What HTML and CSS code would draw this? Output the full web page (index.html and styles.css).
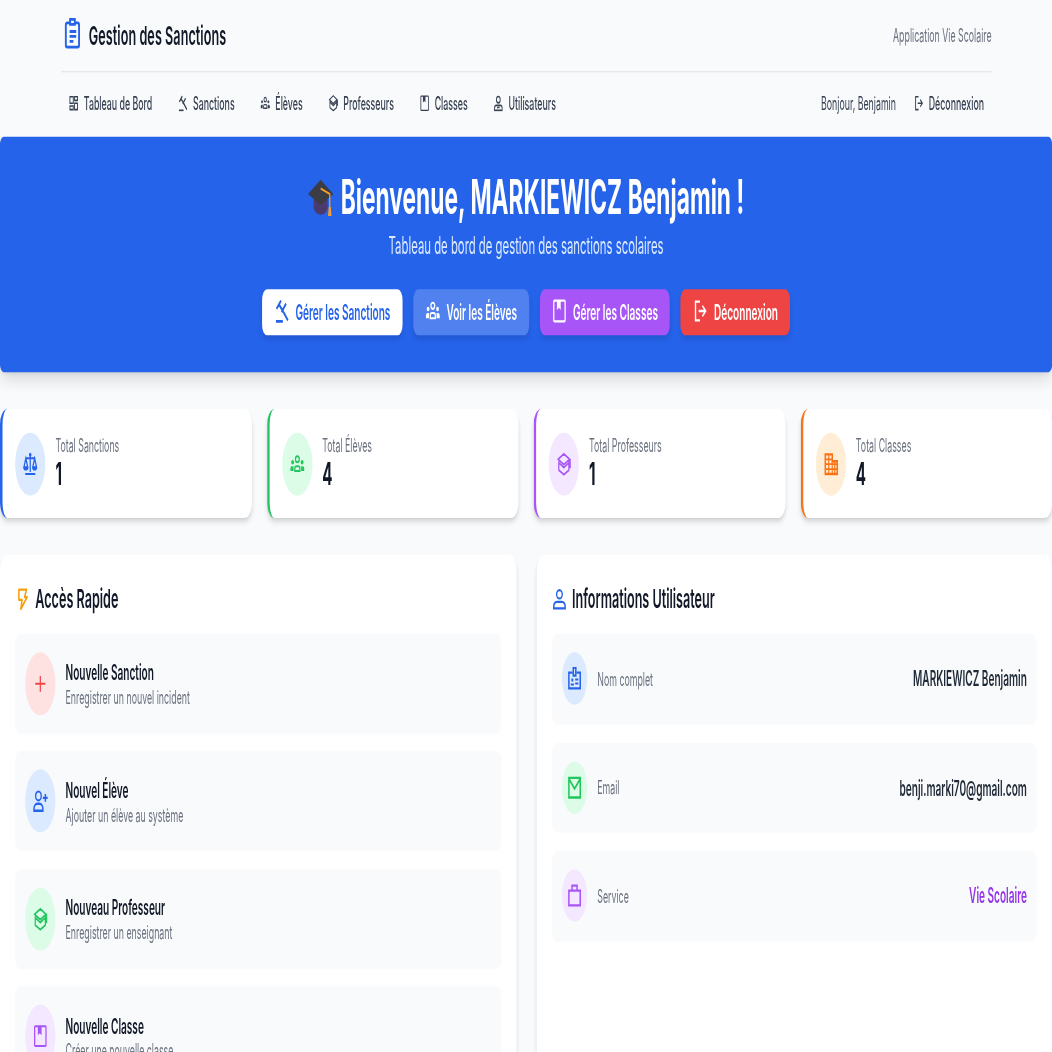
FILE: index.html
```html
<!DOCTYPE html>
<html lang="fr">
<head>
<meta charset="utf-8">
<title>Gestion des Sanctions</title>
<link rel="stylesheet" href="styles.css">
</head>
<body>
<svg class="defs" aria-hidden="true">
  <symbol id="i-clipboard" viewBox="0 0 24 24" preserveAspectRatio="none"><path d="M8.500 5H6.500A1.500 1.500 0 0 0 5 6.500v14A1.500 1.500 0 0 0 6.500 22h11a1.500 1.500 0 0 0 1.500-1.500v-14A1.500 1.500 0 0 0 17.500 5h-2M9.500 2.500h5V6h-5zM9 11h7M9 14.500h7M9 18h4" fill="none" stroke="currentColor" stroke-width="2"/></symbol>
  <symbol id="i-dash" viewBox="0 0 24 24" preserveAspectRatio="none"><path d="M3 3h8v9H3zM14 3h7v5h-7zM14 12h7v9h-7zM3 16h8v5H3z" fill="none" stroke="currentColor" stroke-width="2.200"/></symbol>
  <symbol id="i-gavel" viewBox="0 0 24 24" preserveAspectRatio="none"><path d="M3 22h11M11 2 4 10M19 5l-7 8M8 6l7 7M15 13l7 8" fill="none" stroke="currentColor" stroke-width="2.600"/></symbol>
  <symbol id="i-group" viewBox="0 0 24 24" preserveAspectRatio="none"><circle cx="12" cy="7" r="3" fill="none" stroke="currentColor" stroke-width="2"/><circle cx="4.500" cy="10" r="2.200" fill="currentColor"/><circle cx="19.500" cy="10" r="2.200" fill="currentColor"/><path d="M8 19v-2.500a2.500 2.500 0 0 1 2.500-2.500h3a2.500 2.500 0 0 1 2.500 2.500V19z" fill="none" stroke="currentColor" stroke-width="2"/><path d="M1 19v-2.500A2.500 2.500 0 0 1 3.500 14H6v5zM23 19v-2.500a2.500 2.500 0 0 0-2.500-2.500H18v5z" fill="currentColor"/></symbol>
  <symbol id="i-school" viewBox="0 0 24 24" preserveAspectRatio="none"><path d="M12 1.500 21 7l-9 5.500L3 7zM4 9v9l8 4.500 8-4.500V9M5 11l7 4.500 7-4.500M22 7v9" fill="none" stroke="currentColor" stroke-width="2"/></symbol>
  <symbol id="i-book" viewBox="0 0 24 24" preserveAspectRatio="none"><path d="M4 2h16a1 1 0 0 1 1 1v18a1 1 0 0 1-1 1H4a1 1 0 0 1-1-1V3a1 1 0 0 1 1-1z" fill="none" stroke="currentColor" stroke-width="2"/><path d="M8 2h6v9l-3-2-3 2z" fill="currentColor"/></symbol>
  <symbol id="i-users" viewBox="0 0 24 24" preserveAspectRatio="none"><circle cx="12" cy="7" r="4.500" fill="none" stroke="currentColor" stroke-width="2.200"/><path d="M3 22v-3a4 4 0 0 1 4-4h10a4 4 0 0 1 4 4v3zM9 18h6" fill="none" stroke="currentColor" stroke-width="2.200"/></symbol>
  <symbol id="i-logout" viewBox="0 0 24 24" preserveAspectRatio="none"><path d="M12 3H5v18h7M10 12h11M16 7l5 5-5 5" fill="none" stroke="currentColor" stroke-width="2.200"/></symbol>
  <symbol id="i-scale" viewBox="0 0 24 24" preserveAspectRatio="none"><circle cx="12" cy="2.500" r="2" fill="currentColor"/><path d="M12 3v17M4 22h16M4 6h16M5 6l-3 9h6zM19 6l-3 9h6z" fill="none" stroke="currentColor" stroke-width="2"/><path d="M1 15h8a4 3.500 0 0 1-8 0zM15 15h8a4 3.500 0 0 1-8 0z" fill="currentColor"/></symbol>
  <symbol id="i-building" viewBox="0 0 24 24" preserveAspectRatio="none"><path d="M3 2h11v7h8v13H3z" fill="none" stroke="currentColor" stroke-width="2.400"/><path d="M3 7h11M3 12h19M3 17h19M8.500 2v20M14 9v13M18 9v13" stroke="currentColor" stroke-width="1.800"/></symbol>
  <symbol id="i-bolt" viewBox="0 0 24 24" preserveAspectRatio="none"><path d="M6 2h12l-3 8h4L9 23l2-10H6z" fill="none" stroke="currentColor" stroke-width="2.400" stroke-linejoin="round"/></symbol>
  <symbol id="i-user" viewBox="0 0 24 24" preserveAspectRatio="none"><circle cx="12" cy="7" r="4.500" fill="none" stroke="currentColor" stroke-width="2.200"/><path d="M3 22v-2a5 5 0 0 1 5-5h8a5 5 0 0 1 5 5v2z" fill="none" stroke="currentColor" stroke-width="2.400"/></symbol>
  <symbol id="i-plus" viewBox="0 0 24 24" preserveAspectRatio="none"><path d="M12 4v16M4 12h16" fill="none" stroke="currentColor" stroke-width="2"/></symbol>
  <symbol id="i-userplus" viewBox="0 0 24 24" preserveAspectRatio="none"><circle cx="9" cy="7" r="4.500" fill="none" stroke="currentColor" stroke-width="2.200"/><path d="M2 22v-2a5 5 0 0 1 5-5h4a5 5 0 0 1 5 5v2zM20 5v8M16 9h8" fill="none" stroke="currentColor" stroke-width="2.400"/></symbol>
  <symbol id="i-badge" viewBox="0 0 24 24" preserveAspectRatio="none"><path d="M9 6H3v16h18V6h-6" fill="none" stroke="currentColor" stroke-width="2.400"/><path d="M10 1h4v8h-4z" fill="none" stroke="currentColor" stroke-width="2.400"/><path d="M7 12h3v3H7zM13 12h5v2h-5zM13 16h5v2h-5zM6 17h5v2H6z" fill="currentColor"/></symbol>
  <symbol id="i-mail" viewBox="0 0 24 24" preserveAspectRatio="none"><path d="M3 2h18v20H3zM3 3l9 10 9-10" fill="none" stroke="currentColor" stroke-width="2.400"/></symbol>
  <symbol id="i-bag" viewBox="0 0 24 24" preserveAspectRatio="none"><path d="M3 7h18v15H3zM8 7V2h8v5" fill="none" stroke="currentColor" stroke-width="2.400"/></symbol>
  <symbol id="i-cap" viewBox="0 0 36 36" preserveAspectRatio="none"><path d="M8 17v10c0 4 5 7 10 7s10-3 10-7V17z" fill="#4a3a6e"/><path d="M18 2 36 15 18 25 0 15z" fill="#3c3c44"/><path d="M18 10 31 15v13" fill="none" stroke="#f59e2b" stroke-width="1.800"/><path d="M29.500 27h3l1 8h-5z" fill="#f59e2b"/></symbol>
</svg>
<div class="page">
  <header class="header">
    <div class="brand-row">
      <div class="brand">
        <svg class="brand-icon"><use href="#i-clipboard"/></svg>
        <span class="brand-name">Gestion des Sanctions</span>
      </div>
      <span class="brand-sub">Application Vie Scolaire</span>
    </div>
    <nav class="nav">
      <div class="nav-links nav-main">
        <a class="nav-link"><svg class="nav-icon"><use href="#i-dash"/></svg>Tableau de Bord</a>
        <a class="nav-link"><svg class="nav-icon"><use href="#i-gavel"/></svg>Sanctions</a>
        <a class="nav-link"><svg class="nav-icon"><use href="#i-group"/></svg>Élèves</a>
        <a class="nav-link"><svg class="nav-icon"><use href="#i-school"/></svg>Professeurs</a>
        <a class="nav-link"><svg class="nav-icon"><use href="#i-book"/></svg>Classes</a>
        <a class="nav-link"><svg class="nav-icon"><use href="#i-users"/></svg>Utilisateurs</a>
      </div>
      <div class="nav-links">
        <span class="hello">Bonjour, Benjamin</span>
        <a class="nav-link"><svg class="nav-icon"><use href="#i-logout"/></svg>Déconnexion</a>
      </div>
    </nav>
  </header>

  <section class="hero">
    <h1 class="hero-title"><svg class="hero-cap"><use href="#i-cap"/></svg>Bienvenue, MARKIEWICZ Benjamin !</h1>
    <p class="hero-sub">Tableau de bord de gestion des sanctions scolaires</p>
    <div class="hero-actions">
      <a class="btn btn-white"><svg class="btn-icon"><use href="#i-gavel"/></svg>Gérer les Sanctions</a>
      <a class="btn btn-blue"><svg class="btn-icon"><use href="#i-group"/></svg>Voir les Élèves</a>
      <a class="btn btn-purple"><svg class="btn-icon"><use href="#i-book"/></svg>Gérer les Classes</a>
      <a class="btn btn-red"><svg class="btn-icon"><use href="#i-logout"/></svg>Déconnexion</a>
    </div>
  </section>

  <section class="stats">
    <div class="stat stat-blue">
      <div class="circle c48 tint-blue"><svg class="ic24"><use href="#i-scale"/></svg></div>
      <div><div class="stat-label">Total Sanctions</div><div class="stat-value">1</div></div>
    </div>
    <div class="stat stat-green">
      <div class="circle c48 tint-green"><svg class="ic24"><use href="#i-group"/></svg></div>
      <div><div class="stat-label">Total Élèves</div><div class="stat-value">4</div></div>
    </div>
    <div class="stat stat-purple">
      <div class="circle c48 tint-purple"><svg class="ic24"><use href="#i-school"/></svg></div>
      <div><div class="stat-label">Total Professeurs</div><div class="stat-value">1</div></div>
    </div>
    <div class="stat stat-orange">
      <div class="circle c48 tint-orange"><svg class="ic24"><use href="#i-building"/></svg></div>
      <div><div class="stat-label">Total Classes</div><div class="stat-value">4</div></div>
    </div>
  </section>

  <section class="panels">
    <div class="panel">
      <h2 class="panel-title"><svg class="panel-icon col-amber"><use href="#i-bolt"/></svg>Accès Rapide</h2>
      <div class="rows rows-quick">
        <a class="row">
          <div class="circle c48 tint-red"><svg class="ic24"><use href="#i-plus"/></svg></div>
          <div><div class="row-title">Nouvelle Sanction</div><div class="row-sub">Enregistrer un nouvel incident</div></div>
        </a>
        <a class="row">
          <div class="circle c48 tint-blue"><svg class="ic24"><use href="#i-userplus"/></svg></div>
          <div><div class="row-title">Nouvel Élève</div><div class="row-sub">Ajouter un élève au système</div></div>
        </a>
        <a class="row">
          <div class="circle c48 tint-green"><svg class="ic24"><use href="#i-school"/></svg></div>
          <div><div class="row-title">Nouveau Professeur</div><div class="row-sub">Enregistrer un enseignant</div></div>
        </a>
        <a class="row">
          <div class="circle c48 tint-purple"><svg class="ic24"><use href="#i-book"/></svg></div>
          <div><div class="row-title">Nouvelle Classe</div><div class="row-sub">Créer une nouvelle classe</div></div>
        </a>
      </div>
    </div>
    <div class="panel">
      <h2 class="panel-title"><svg class="panel-icon col-blue"><use href="#i-user"/></svg>Informations Utilisateur</h2>
      <div class="rows">
        <div class="row row-info">
          <div class="circle c40 tint-blue"><svg class="ic24"><use href="#i-badge"/></svg></div>
          <span class="info-label">Nom complet</span>
          <span class="info-value">MARKIEWICZ Benjamin</span>
        </div>
        <div class="row row-info">
          <div class="circle c40 tint-green"><svg class="ic24"><use href="#i-mail"/></svg></div>
          <span class="info-label">Email</span>
          <span class="info-value">benji.marki70@gmail.com</span>
        </div>
        <div class="row row-info">
          <div class="circle c40 tint-purple"><svg class="ic24"><use href="#i-bag"/></svg></div>
          <span class="info-label">Service</span>
          <span class="info-value info-accent">Vie Scolaire</span>
        </div>
      </div>
    </div>
  </section>
</div>
</body>
</html>
```
FILE: styles.css
```css
html, body { margin: 0; height: 1052px; overflow: hidden; background: #f9fafb; }
.defs { display: none; }

/* The reference is a 1670x800 layout resampled into a square frame. */
.page {
  width: 1670px;
  height: 800px;
  overflow: hidden;
  transform: scale(0.63, 1.315);
  transform-origin: 0 0;
  filter: blur(0.35px);
  font-family: Inter, "Noto Sans", sans-serif;
  color: #111827;
  background: #f9fafb;
}

.header { padding: 0 96px 0 97px; height: 103.500px; display: flex; flex-direction: column; }
.brand-row { height: 54.500px; padding-bottom: 0.500px; display: flex; align-items: center; justify-content: space-between; border-bottom: 1px solid #e5e7eb; box-sizing: border-box; }
.brand { display: flex; align-items: center; gap: 8px; }
.brand-icon { width: 36px; height: 26px; margin-bottom: 4px; color: #2563eb; }
.brand-name { font-size: 20px; font-weight: 600; letter-spacing: 0.100px; }
.brand-sub { font-size: 14px; color: #6b7280; }
.nav { flex: 1; padding-bottom: 1.500px; display: flex; align-items: center; justify-content: space-between; }
.nav-links { display: flex; align-items: center; gap: 16px; }
.nav-main { gap: 16.500px; }
.nav-link { display: flex; align-items: center; gap: 8px; padding: 0 12px; font-size: 14px; font-weight: 500; color: #374151; }
.nav-icon { width: 16px; height: 13px; }
.hello { font-size: 14px; color: #374151; }

.hero {
  height: 179.500px;
  box-sizing: border-box;
  padding-top: 24px;
  background: #2563eb;
  color: #fff;
  border-radius: 6px;
  box-shadow: 0 10px 15px -3px rgba(0,0,0,.1), 0 4px 6px -4px rgba(0,0,0,.1);
  display: flex;
  flex-direction: column;
  align-items: center;
}
.hero-title { margin: 0; font-size: 36px; line-height: 44px; font-weight: 700; letter-spacing: 0.100px; display: flex; align-items: center; gap: 12px; }
.hero-cap { width: 40px; height: 30px; }
.hero-sub { margin: 1px 0 0; font-size: 18px; line-height: 28px; color: #dbeafe; }
.hero-actions { display: flex; gap: 17px; margin-top: 19px; }
.btn { height: 35px; box-sizing: border-box; display: flex; align-items: center; gap: 10px; padding: 0 19px 1px; border-radius: 8px; font-size: 16px; font-weight: 600; box-shadow: 0 4px 6px -1px rgba(0,0,0,.1); color: #fff; }
.btn-icon { width: 24px; height: 19px; }
.btn-white { background: #fff; color: #2563eb; }
.btn-blue { background: #5081ef; }
.btn-purple { background: #a855f7; }
.btn-red { background: #ef4444; }

.stats { display: grid; grid-template-columns: repeat(4, 1fr); gap: 24px; margin-top: 28px; }
.stat { height: 83px; box-sizing: border-box; background: #fff; border-left: 4px solid; border-radius: 12px; padding-left: 20px; display: flex; align-items: center; gap: 16px; box-shadow: 0 4px 6px -1px rgba(0,0,0,.1), 0 2px 4px -2px rgba(0,0,0,.1); }
.stat-blue { border-color: #2563eb; }
.stat-green { border-color: #22c55e; }
.stat-purple { border-color: #a855f7; }
.stat-orange { border-color: #f97316; }
.stat-label { font-size: 14px; line-height: 20px; color: #6b7280; }
.stat-value { margin: -2px 0 2px; font-size: 24px; line-height: 28px; font-weight: 700; color: #111827; }

.circle { border-radius: 50%; display: flex; align-items: center; justify-content: center; flex: none; }
.c48 { width: 48px; height: 48px; }
.c40 { width: 40px; height: 40px; }
.ic24 { width: 24px; height: 18px; }
.tint-blue { background: #dbeafe; color: #2563eb; }
.tint-green { background: #dcfce7; color: #22c55e; }
.tint-purple { background: #f3e8ff; color: #a855f7; }
.tint-orange { background: #ffedd5; color: #f97316; }
.tint-red { background: #fee2e2; color: #ef4444; }
.col-amber { color: #f59e0b; }
.col-blue { color: #2563eb; }

.panels { display: grid; grid-template-columns: 820px 1fr; gap: 32px; margin-top: 28px; }
.panel { background: #fff; border-radius: 12px; padding: 19px 24px; min-height: 400px; box-shadow: 0 4px 6px -1px rgba(0,0,0,.1), 0 2px 4px -2px rgba(0,0,0,.1); }
.panel-title { margin: 0 0 13px; height: 28px; display: flex; align-items: center; gap: 8px; font-size: 20px; line-height: 28px; font-weight: 600; color: #111827; }
.panel-icon { width: 24px; height: 17px; }
.rows { display: flex; flex-direction: column; gap: 14px; }
.rows-quick { gap: 13.750px; }
.row { display: flex; align-items: center; gap: 16px; padding: 13.850px 16px; background: #f9fafb; border-radius: 8px; }
.row-info { padding: 14.300px 16px; }
.row-title { font-size: 16px; line-height: 24px; font-weight: 600; color: #111827; }
.row-sub { margin-top: -3px; font-size: 14px; line-height: 20px; color: #6b7280; }
.info-label { font-size: 14px; color: #6b7280; }
.info-value { margin-left: auto; font-size: 16px; font-weight: 600; color: #1f2937; }
.info-accent { color: #9333ea; }
```
